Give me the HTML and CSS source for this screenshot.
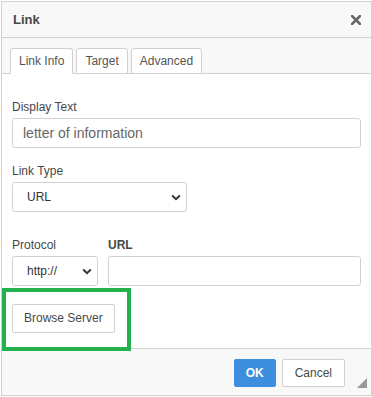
FILE: index.html
```html
<!DOCTYPE html>
<html>
<head>
<meta charset="utf-8">
<link rel="stylesheet" href="styles.css">
</head>
<body>
<div class="dialog">
  <div class="title">
    <span class="title-text">Link</span>
    <svg class="close" width="10" height="10" viewBox="0 0 10 10"><path d="M1 1 L9 9 M9 1 L1 9" stroke="#666" stroke-width="2.6" stroke-linecap="square"/></svg>
  </div>
  <div class="tabs">
    <div class="tab active">Link Info</div>
    <div class="tab">Target</div>
    <div class="tab">Advanced</div>
  </div>
  <div class="contents">
    <div class="field">
      <div class="label">Display Text</div>
      <div class="input text-input">letter of information</div>
    </div>
    <div class="field field-type">
      <div class="label">Link Type</div>
      <div class="input select select-type"><span>URL</span><svg class="chev" width="10" height="7" viewBox="0 0 10 7"><path d="M1.2 1.5 L5 5.2 L8.8 1.5" fill="none" stroke="#333" stroke-width="2"/></svg></div>
    </div>
    <div class="row">
      <div class="field protocol">
        <div class="label">Protocol</div>
        <div class="input select"><span>http://</span><svg class="chev" width="10" height="7" viewBox="0 0 10 7"><path d="M1.2 1.5 L5 5.2 L8.8 1.5" fill="none" stroke="#333" stroke-width="2"/></svg></div>
      </div>
      <div class="field url">
        <div class="label bold">URL</div>
        <div class="input"></div>
      </div>
    </div>
    <div class="browse-row">
      <div class="btn">Browse Server</div>
    </div>
  </div>
  <div class="footer">
    <div class="btn ok">OK</div>
    <div class="btn">Cancel</div>
  </div>
  <div class="resize"></div>
  <div class="highlight"></div>
</div>
</body>
</html>
```

FILE: styles.css
```css
* { box-sizing: border-box; }
html, body { background: #fff; }
body {
  margin: 1px 0 0 1px;
  font-family: "Liberation Sans", Arial, sans-serif;
  font-size: 12px;
  color: #484848;
}
.dialog {
  position: relative;
  width: 371px;
  height: 395px;
  border: 1px solid #d1d1d1;
  background: #f8f8f8;
  display: flex;
  flex-direction: column;
}
.title {
  height: 36px;
  border-bottom: 1px solid #d1d1d1;
  display: flex;
  align-items: center;
  justify-content: space-between;
  padding: 0 10px 0 11px;
  background: #f8f8f8;
}
.title-text {
  font-size: 13px;
  font-weight: bold;
  line-height: 35px;
  color: #484848;
}
.close { display: block; margin-top: 1px; }
.tabs {
  height: 36px;
  border-bottom: 1px solid #d1d1d1;
  padding: 10px 0 0 8px;
  display: flex;
  align-items: flex-end;
  gap: 3px;
  background: #f8f8f8;
}
.tab {
  height: 26px;
  line-height: 24px;
  padding: 0 8px;
  border: 1px solid #d1d1d1;
  border-radius: 3px 3px 0 0;
  background: #fff;
  color: #555;
  font-size: 12px;
  margin-bottom: -1px;
}
.tab.active {
  border-bottom-color: #fff;
}
.contents {
  flex: 1;
  background: #fff;
  padding: 26px 10px 0 10px;
}
.label {
  line-height: 14px;
  font-size: 12px;
  color: #484848;
  margin-bottom: 4px;
}
.label.bold { font-weight: bold; }
.input {
  height: 30px;
  border: 1px solid #d1d1d1;
  border-radius: 3px;
  background: #fff;
}
.text-input {
  font-size: 14px;
  line-height: 28px;
  padding: 0 10px;
  color: #666;
}
.field-type { margin-top: 16px; }
.select {
  display: flex;
  align-items: center;
  justify-content: space-between;
  padding: 0 5px 0 14px;
  font-size: 12px;
  color: #333;
}
.select-type { width: 175px; }
.chev { display: block; margin-top: 1px; }
.row {
  display: flex;
  gap: 10px;
  margin-top: 26px;
}
.protocol { width: 86px; }
.url { flex: 1; }
.browse-row {
  margin-top: 18px;
  display: flex;
}
.btn {
  height: 29px;
  line-height: 27px;
  padding: 0 11px;
  border: 1px solid #d1d1d1;
  border-radius: 2px;
  background: #fff;
  color: #484848;
  font-size: 12px;
}
.footer {
  height: 47px;
  border-top: 1px solid #d1d1d1;
  background: #f8f8f8;
  display: flex;
  justify-content: flex-end;
  align-items: flex-start;
  gap: 6px;
  padding: 10px 26px 0 0;
}
.footer .btn {
  height: 28px;
  line-height: 26px;
  padding: 0 12px;
}
.footer .btn.ok {
  background: #3d8ede;
  border-color: #3d8ede;
  color: #fff;
  padding: 0 11px;
  font-weight: bold;
}
.resize {
  position: absolute;
  right: 4px;
  bottom: 7px;
  width: 10px;
  height: 10px;
  background: #999;
  clip-path: polygon(100% 0, 100% 100%, 0 100%);
}
.highlight {
  position: absolute;
  left: 0;
  top: 286px;
  width: 129px;
  height: 63px;
  border: 4px solid #22b14c;
}
```
